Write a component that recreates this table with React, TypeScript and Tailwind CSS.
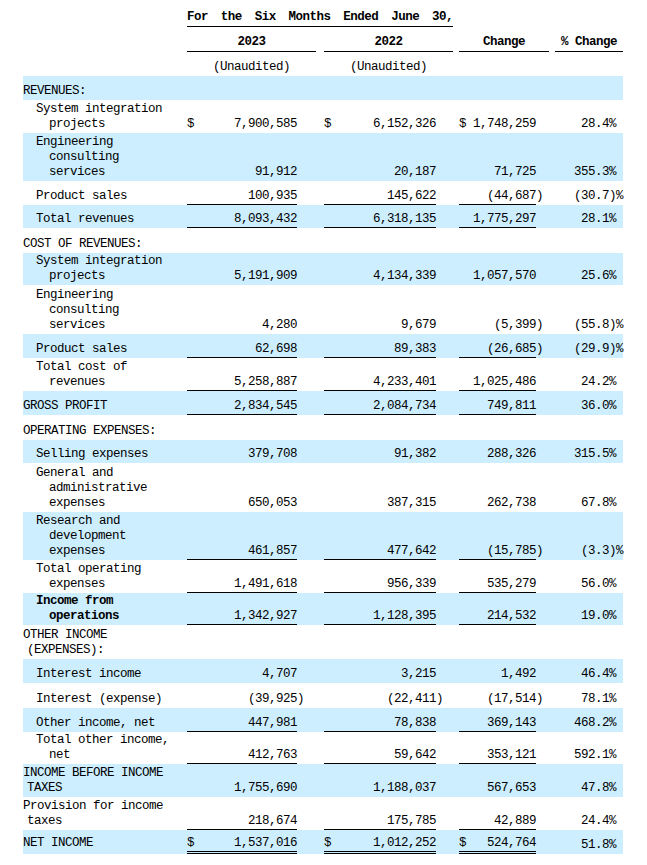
type Row = {
  label: string[]
  top?: boolean
  bold?: boolean
  blue?: boolean
  h: string
  vals?: string[]
  dollar?: boolean
  line?: 'single' | 'double'
}

const rows: Row[] = [
  { label: ["REVENUES:"], top: true, blue: true, h: "h-[24px]" },
  { label: ["System integration", "projects"], h: "h-[33px]", dollar: true, vals: ["7,900,585", "6,152,326", "1,748,259", "28.4%"] },
  { label: ["Engineering", "consulting", "services"], blue: true, h: "h-[48px]", vals: ["91,912", "20,187", "71,725", "355.3%"] },
  { label: ["Product sales"], h: "h-[24px]", line: 'single', vals: ["100,935", "145,622", "(44,687)", "(30.7)%"] },
  { label: ["Total revenues"], blue: true, h: "h-[23px]", line: 'single', vals: ["8,093,432", "6,318,135", "1,775,297", "28.1%"] },
  { label: ["COST OF REVENUES:"], top: true, h: "h-[25px]" },
  { label: ["System integration", "projects"], blue: true, h: "h-[32px]", vals: ["5,191,909", "4,134,339", "1,057,570", "25.6%"] },
  { label: ["Engineering", "consulting", "services"], h: "h-[49px]", vals: ["4,280", "9,679", "(5,399)", "(55.8)%"] },
  { label: ["Product sales"], blue: true, h: "h-[24px]", line: 'single', vals: ["62,698", "89,383", "(26,685)", "(29.9)%"] },
  { label: ["Total cost of", "revenues"], h: "h-[33px]", line: 'single', vals: ["5,258,887", "4,233,401", "1,025,486", "24.2%"] },
  { label: ["GROSS PROFIT"], top: true, blue: true, h: "h-[24px]", line: 'single', vals: ["2,834,545", "2,084,734", "749,811", "36.0%"] },
  { label: ["OPERATING EXPENSES:"], top: true, h: "h-[25px]" },
  { label: ["Selling expenses"], blue: true, h: "h-[23px]", vals: ["379,708", "91,382", "288,326", "315.5%"] },
  { label: ["General and", "administrative", "expenses"], h: "h-[49px]", vals: ["650,053", "387,315", "262,738", "67.8%"] },
  { label: ["Research and", "development", "expenses"], blue: true, h: "h-[48px]", line: 'single', vals: ["461,857", "477,642", "(15,785)", "(3.3)%"] },
  { label: ["Total operating", "expenses"], h: "h-[33px]", line: 'single', vals: ["1,491,618", "956,339", "535,279", "56.0%"] },
  { label: ["Income from", "operations"], bold: true, blue: true, h: "h-[32px]", line: 'single', vals: ["1,342,927", "1,128,395", "214,532", "19.0%"] },
  { label: ["OTHER INCOME", "(EXPENSES):"], top: true, h: "h-[34px]" },
  { label: ["Interest income"], blue: true, h: "h-[24px]", vals: ["4,707", "3,215", "1,492", "46.4%"] },
  { label: ["Interest (expense)"], h: "h-[25px]", vals: ["(39,925)", "(22,411)", "(17,514)", "78.1%"] },
  { label: ["Other income, net"], blue: true, h: "h-[24px]", line: 'single', vals: ["447,981", "78,838", "369,143", "468.2%"] },
  { label: ["Total other income,", "net"], h: "h-[32px]", line: 'single', vals: ["412,763", "59,642", "353,121", "592.1%"] },
  { label: ["INCOME BEFORE INCOME", "TAXES"], top: true, blue: true, h: "h-[33px]", vals: ["1,755,690", "1,188,037", "567,653", "47.8%"] },
  { label: ["Provision for income", "taxes"], top: true, h: "h-[33px]", line: 'single', vals: ["218,674", "175,785", "42,889", "24.4%"] },
  { label: ["NET INCOME"], top: true, blue: true, h: "h-[24px]", line: 'double', dollar: true, vals: ["1,537,016", "1,012,252", "524,764", "51.8%"] },
]

// split "(44,687)" into "(44,687" + ")" and "(30.7)%" into "(30.7)" + "%"
function split(v: string, pct: boolean): [string, string] {
  if (!v.startsWith("(")) return [v, ""]
  return pct ? [v.slice(0, -1), "%"] : [v.slice(0, -1), ")"]
}

function NumCell({ width, value, dollar, line }: { width: string; value?: string; dollar?: boolean; line?: Row['line'] }) {
  const border =
    line === 'double'
      ? "border-b-[3px] border-double border-black"
      : line === 'single'
        ? "border-b border-black"
        : "border-b border-transparent"
  return (
    <div className={`${width} flex items-end justify-between ${border}`}>
      <span>{dollar ? "$" : ""}</span>
      <span>{value}</span>
    </div>
  )
}

function TrailCell({ width, text, line }: { width: string; text: string; line?: Row['line'] }) {
  const border = line === 'double' ? "border-b-[3px] border-double border-transparent" : "border-b border-transparent"
  return <div className={`${width} flex items-end ${border}`}>{text}</div>
}

function TableRow({ row }: { row: Row }) {
  const vals = row.vals ?? ["", "", "", ""]
  const [a, at] = split(vals[0], false)
  const [b, bt] = split(vals[1], false)
  const [c, ct] = split(vals[2], false)
  const [d, dt] = split(vals[3], true)
  const labelBorder = row.line === 'double' ? "border-b-[3px] border-transparent" : "border-b border-transparent"
  return (
    <div className={`flex ${row.h} ${row.blue ? "bg-[#cceeff]" : ""}`}>
      <div className={`w-[164px] flex flex-col justify-end ${labelBorder} ${row.bold ? "font-bold" : ""}`}>
        {row.label.map((l, i) => (
          <div
            key={i}
            className={`whitespace-pre ${row.top ? (i === 0 ? "pl-0" : "pl-[4px]") : i === 0 ? "pl-[13px]" : "pl-[26px]"}`}
          >
            {l}
          </div>
        ))}
      </div>
      <NumCell width="w-[110px]" value={a} dollar={row.dollar} line={row.vals ? row.line : undefined} />
      <TrailCell width="w-[27px]" text={at} line={row.line} />
      <NumCell width="w-[112px]" value={b} dollar={row.dollar} line={row.vals ? row.line : undefined} />
      <TrailCell width="w-[23px]" text={bt} line={row.line} />
      <NumCell width="w-[77px]" value={c} dollar={row.dollar} line={row.vals ? row.line : undefined} />
      <TrailCell width="w-[19px]" text={ct} line={row.line} />
      <NumCell width="w-[61px]" value={d} />
      <TrailCell width="w-[7px]" text={dt} line={row.line} />
    </div>
  )
}

export default function App() {
  const words = ["For", "the", "Six", "Months", "Ended", "June", "30,"]
  return (
    <div className="bg-white min-h-[865px] w-[647px] pl-[23px] text-black font-[Liberation_Mono,monospace] text-[12.5px] tracking-[-0.5px] leading-[15px]">
      <div className="w-[600px] pt-[10px]">
        <div className="flex">
          <div className="w-[164px]" />
          <div className="w-[266px] flex justify-between font-bold pb-[1px] border-b border-black">
            {words.map((w) => (
              <span key={w}>{w}</span>
            ))}
          </div>
        </div>
        <div className="flex pt-[8px] font-bold">
          <div className="w-[164px]" />
          <div className="w-[129px] text-center pb-[1px] border-b border-black">2023</div>
          <div className="w-[8px]" />
          <div className="w-[129px] text-center pb-[1px] border-b border-black">2022</div>
          <div className="w-[6px]" />
          <div className="w-[90px] text-center pb-[1px] border-b border-black">Change</div>
          <div className="w-[6px]" />
          <div className="w-[68px] text-center pb-[1px] border-b border-black">% Change</div>
        </div>
        <div className="flex pt-[8px] pb-[1px]">
          <div className="w-[164px]" />
          <div className="w-[129px] text-center">(Unaudited)</div>
          <div className="w-[8px]" />
          <div className="w-[129px] text-center">(Unaudited)</div>
        </div>
        {rows.map((r, i) => (
          <TableRow key={i} row={r} />
        ))}
      </div>
    </div>
  )
}
